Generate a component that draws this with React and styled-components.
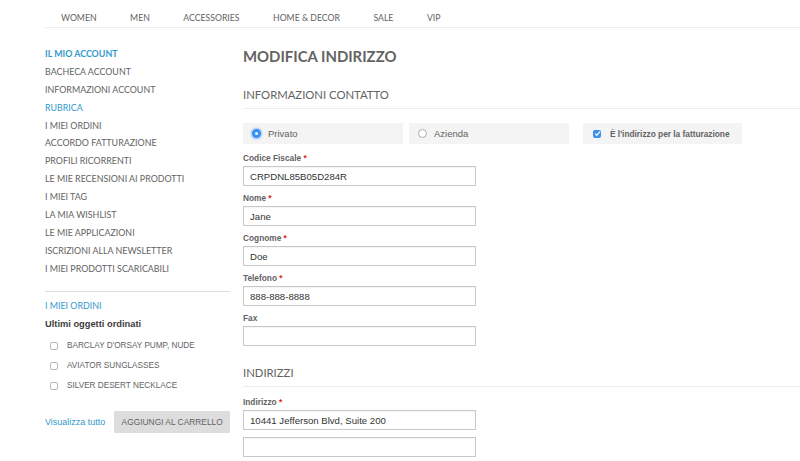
import React from 'react'
import styled, { createGlobalStyle } from 'styled-components'

const GlobalStyle = createGlobalStyle`
  html, body {
    margin: 0;
    padding: 0;
    background: #fff;
  }
  body {
    font-family: 'Liberation Sans', Arial, sans-serif;
    color: #636363;
  }
  * {
    box-sizing: border-box;
  }
`

const navItems = ['WOMEN', 'MEN', 'ACCESSORIES', 'HOME & DECOR', 'SALE', 'VIP']

const accountLinks = [
  { label: 'IL MIO ACCOUNT', active: true, bold: true },
  { label: 'BACHECA ACCOUNT' },
  { label: 'INFORMAZIONI ACCOUNT' },
  { label: 'RUBRICA', active: true },
  { label: 'I MIEI ORDINI' },
  { label: 'ACCORDO FATTURAZIONE' },
  { label: 'PROFILI RICORRENTI' },
  { label: 'LE MIE RECENSIONI AI PRODOTTI' },
  { label: 'I MIEI TAG' },
  { label: 'LA MIA WISHLIST' },
  { label: 'LE MIE APPLICAZIONI' },
  { label: 'ISCRIZIONI ALLA NEWSLETTER' },
  { label: 'I MIEI PRODOTTI SCARICABILI' },
]

const recentItems = ['BARCLAY D\'ORSAY PUMP, NUDE', 'AVIATOR SUNGLASSES', 'SILVER DESERT NECKLACE']

const contactFields = [
  { label: 'Codice Fiscale', required: true, value: 'CRPDNL85B05D284R' },
  { label: 'Nome', required: true, value: 'Jane' },
  { label: 'Cognome', required: true, value: 'Doe' },
  { label: 'Telefono', required: true, value: '888-888-8888' },
  { label: 'Fax', required: false, value: '' },
]

function App() {
  return (
    <>
      <GlobalStyle />
      <StyledNav>
        {navItems.map((item) => (
          <NavItem key={item}>{item}</NavItem>
        ))}
      </StyledNav>
      <StyledPage>
        <Sidebar>
          <LinkList>
            {accountLinks.map((link) => (
              <SideLink key={link.label} $active={link.active} $bold={link.bold}>
                {link.label}
              </SideLink>
            ))}
          </LinkList>
          <SideDivider />
          <BlockTitle>I MIEI ORDINI</BlockTitle>
          <BlockSubtitle>Ultimi oggetti ordinati</BlockSubtitle>
          <RecentList>
            {recentItems.map((item) => (
              <RecentItem key={item}>
                <MiniCheck />
                <span>{item}</span>
              </RecentItem>
            ))}
          </RecentList>
          <SideActions>
            <ViewAll>Visualizza tutto</ViewAll>
            <GreyButton>AGGIUNGI AL CARRELLO</GreyButton>
          </SideActions>
        </Sidebar>
        <Main>
          <PageTitle>MODIFICA INDIRIZZO</PageTitle>
          <SectionTitle>INFORMAZIONI CONTATTO</SectionTitle>
          <ChoiceRow>
            <ChoiceBox $width={160}>
              <Radio $checked />
              <span>Privato</span>
            </ChoiceBox>
            <ChoiceBox $width={160}>
              <Radio />
              <span>Azienda</span>
            </ChoiceBox>
            <ChoiceBox $width={159} $gap={9} $bold>
              <CheckedBox>
                <svg width="7" height="7" viewBox="0 0 8 8">
                  <path d="M1.3 4.2 L3.2 6 L6.8 1.8" fill="none" stroke="#fff" strokeWidth="1.4" />
                </svg>
              </CheckedBox>
              <span>È l'indirizzo per la fatturazione</span>
            </ChoiceBox>
          </ChoiceRow>
          <FieldList>
            {contactFields.map((field) => (
              <Field key={field.label}>
                <FieldLabel>
                  {field.label}
                  {field.required && <Required> *</Required>}
                </FieldLabel>
                <TextInput>{field.value}</TextInput>
              </Field>
            ))}
          </FieldList>
          <SectionTitle $top={19}>INDIRIZZI</SectionTitle>
          <FieldList $top={9}>
            <Field>
              <FieldLabel>
                Indirizzo<Required> *</Required>
              </FieldLabel>
              <TextInput>10441 Jefferson Blvd, Suite 200</TextInput>
              <TextInput $top={7} />
            </Field>
          </FieldList>
        </Main>
      </StyledPage>
    </>
  )
}

const StyledNav = styled.nav`
  display: flex;
  margin-left: 45px;
  padding: 11px 0 0 16px;
  height: 28px;
  border-bottom: 1px solid #ededed;
  font-family: 'Lato', 'Noto Sans', sans-serif;
  font-size: 8.7px;
  color: #636363;
`

const NavItem = styled.div`
  margin-right: 33.5px;
  line-height: 14px;
`

const StyledPage = styled.div`
  display: flex;
  padding-left: 45px;
  padding-top: 19px;
`

const Sidebar = styled.aside`
  width: 185px;
  flex-shrink: 0;
  font-family: 'Lato', 'Noto Sans', sans-serif;
`

const LinkList = styled.div`
  display: flex;
  flex-direction: column;
`

const SideLink = styled.div`
  height: 17.9px;
  line-height: 14px;
  font-size: 8.9px;
  white-space: nowrap;
  color: ${(props) => (props.$active ? '#3399cc' : '#636363')};
  font-weight: ${(props) => (props.$bold ? 700 : 400)};
`

const SideDivider = styled.div`
  margin-top: 11px;
  border-top: 1px solid #dedede;
`

const BlockTitle = styled.div`
  margin-top: 7px;
  font-size: 8.9px;
  line-height: 14px;
  color: #3399cc;
`

const BlockSubtitle = styled.div`
  margin-top: 4px;
  font-family: 'Liberation Sans', Arial, sans-serif;
  font-size: 9.3px;
  font-weight: 700;
  line-height: 14px;
  color: #3d3d3d;
`

const RecentList = styled.div`
  margin-top: 5px;
  padding-left: 5px;
  display: flex;
  flex-direction: column;
`

const RecentItem = styled.div`
  display: flex;
  align-items: center;
  gap: 9px;
  height: 20px;
  font-family: 'Liberation Sans', Arial, sans-serif;
  font-size: 8.2px;
  white-space: nowrap;
  color: #636363;
`

const MiniCheck = styled.span`
  width: 8px;
  height: 8px;
  border: 1px solid #b8b8b8;
  border-radius: 2px;
  background: #fff;
`

const SideActions = styled.div`
  display: flex;
  align-items: center;
  margin-top: 15px;
`

const ViewAll = styled.span`
  font-family: 'Liberation Sans', Arial, sans-serif;
  font-size: 9px;
  white-space: nowrap;
  color: #3399cc;
  margin-right: 9px;
`

const GreyButton = styled.button`
  width: 116px;
  height: 22px;
  padding: 0;
  border: none;
  background: #dddddd;
  font-family: 'Liberation Sans', Arial, sans-serif;
  font-size: 8.4px;
  white-space: nowrap;
  color: #636363;
`

const Main = styled.main`
  margin-left: 13px;
  flex: 1;
`

const PageTitle = styled.h1`
  margin: 0;
  font-family: 'Lato', 'Noto Sans', sans-serif;
  font-size: 14.9px;
  font-weight: 700;
  line-height: 18px;
  color: #636363;
`

const SectionTitle = styled.h2`
  margin: ${(props) => props.$top || 22}px 0 0;
  padding-bottom: 5px;
  border-bottom: 1px solid #ededed;
  font-family: 'Lato', 'Noto Sans', sans-serif;
  font-size: 11.3px;
  font-weight: 400;
  line-height: 16px;
  color: #636363;
`

const ChoiceRow = styled.div`
  display: flex;
  gap: 6px;
  margin-top: 14px;
  & > :last-child {
    margin-left: 8px;
  }
`

const ChoiceBox = styled.div`
  display: flex;
  align-items: center;
  gap: ${(props) => props.$gap || 7}px;
  width: ${(props) => props.$width}px;
  height: 21px;
  padding-left: ${(props) => (props.$bold ? 10 : 9)}px;
  background: #f4f4f4;
  font-family: 'Liberation Sans', Arial, sans-serif;
  font-size: ${(props) => (props.$bold ? 8.3 : 9.5)}px;
  font-weight: ${(props) => (props.$bold ? 700 : 400)};
  white-space: nowrap;
  color: #636363;
`

const Radio = styled.span`
  width: 9px;
  height: 9px;
  border-radius: 50%;
  border: ${(props) => (props.$checked ? '3px solid #3b8ff0' : '1px solid #aaa')};
  background: #fff;
  box-shadow: ${(props) => (props.$checked ? '0 0 2px 1px rgba(59,143,240,0.5)' : 'none')};
`

const CheckedBox = styled.span`
  display: flex;
  align-items: center;
  justify-content: center;
  width: 8px;
  height: 8px;
  border-radius: 2px;
  background: #3b8ff0;
`

const FieldList = styled.div`
  display: grid;
  row-gap: 6px;
  margin-top: ${(props) => props.$top || 8}px;
`

const Field = styled.div`
  display: flex;
  flex-direction: column;
`

const FieldLabel = styled.label`
  display: block;
  height: 12px;
  font-family: 'Liberation Sans', Arial, sans-serif;
  font-size: 8.3px;
  font-weight: 700;
  line-height: 12px;
  color: #636363;
  margin-bottom: 2px;
`

const Required = styled.span`
  color: #df280a;
`

const TextInput = styled.div`
  width: 233px;
  height: 20px;
  flex-shrink: 0;
  margin-top: ${(props) => props.$top || 0}px;
  padding: 0 6px;
  display: flex;
  align-items: center;
  border: 1px solid #c8c8c8;
  box-shadow: inset 0 1px 1px rgba(0, 0, 0, 0.04);
  font-family: 'Liberation Sans', Arial, sans-serif;
  font-size: 9.6px;
  color: #333;
  background: #fff;
`

export default App
